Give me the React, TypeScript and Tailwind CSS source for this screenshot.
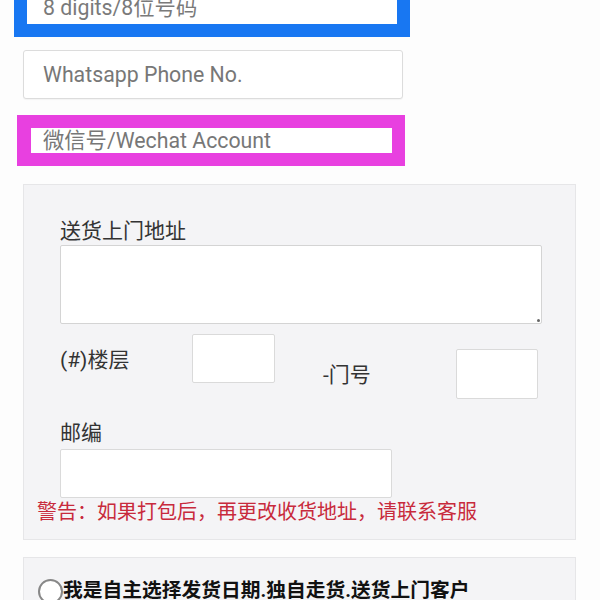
import React from "react";

const font = { fontFamily: "Roboto, 'Noto Sans CJK SC', sans-serif" };

export default function App() {
  return (
    <div
      className="w-[600px] h-[600px] overflow-hidden bg-[#fdfdfd] text-[21px] leading-[28px] text-[#333]"
      style={font}
    >
      {/* Phone (focused, blue) */}
      <div className="ml-[14px] mt-[-21px] w-[396px] border-[13px] border-[#1877f2] bg-white">
        <div className="h-[32px] pl-[16px] flex items-center text-[21.3px] text-[#7a7a7a] whitespace-nowrap">
          8 digits/8位号码
        </div>
      </div>

      {/* Whatsapp */}
      <div className="ml-[23px] mt-[13px] w-[380px] h-[49px] border border-[#dcdcdc] rounded-[3px] bg-white pl-[19px] flex items-center text-[21.3px] text-[#777] shadow-[0_1px_1px_rgba(0,0,0,0.04)]">
        Whatsapp Phone No.
      </div>

      {/* Wechat (magenta) */}
      <div className="ml-[17px] mt-[16px] w-[388px] border-[13px] border-l-[14px] border-[#e840e0] bg-white">
        <div className="h-[25px] pl-[12px] flex items-center text-[21.3px] text-[#777] whitespace-nowrap">
          微信号/Wechat Account
        </div>
      </div>

      {/* Address panel */}
      <div className="ml-[23px] mt-[18px] w-[553px] bg-[#f4f4f6] border border-[#e6e6e8] pt-[32px] pb-[13px]">
        <div className="pl-[36px] pr-[33px]">
          <div className="h-[28px]">送货上门地址</div>
          <div className="relative w-[482px] h-[79px] bg-white border border-[#d4d4d4] rounded-[2px]">
            <span className="absolute right-[1px] bottom-[1px] w-[3px] h-[3px] rounded-full bg-[#666]" />
          </div>

          <div className="flex items-start mt-[10px]">
            <div className="w-[132px] mt-[12px] h-[28px]">(#)楼层</div>
            <div className="w-[83px] h-[49px] bg-white border border-[#dadada] rounded-[2px]" />
            <div className="ml-[48px] w-[133px] mt-[27px] h-[28px]">-门号</div>
            <div className="w-[82px] h-[50px] mt-[15px] bg-white border border-[#dadada] rounded-[2px]" />
          </div>

          <div className="mt-[20px] h-[28px]">邮编</div>
          <div className="mt-[2px] w-[332px] h-[49px] bg-white border border-[#dadada] rounded-[2px]" />
        </div>
        <div className="pl-[13px] text-[20px] text-[#c82a3c] whitespace-nowrap">
          警告：如果打包后，再更改收货地址，请联系客服
        </div>
      </div>

      {/* Delivery option panel */}
      <div className="ml-[23px] mt-[17px] w-[553px] h-[80px] bg-[#f4f4f6] border border-[#e6e6e8] pt-[19px] pl-[14px]">
        <div className="flex items-center">
          <span className="w-[25px] h-[25px] rounded-full border-2 border-[#888] bg-white shrink-0" />
          <span className="text-[19.75px] font-bold text-[#111] whitespace-nowrap">
            我是自主选择发货日期.独自走货.送货上门客户
          </span>
        </div>
      </div>
    </div>
  );
}
